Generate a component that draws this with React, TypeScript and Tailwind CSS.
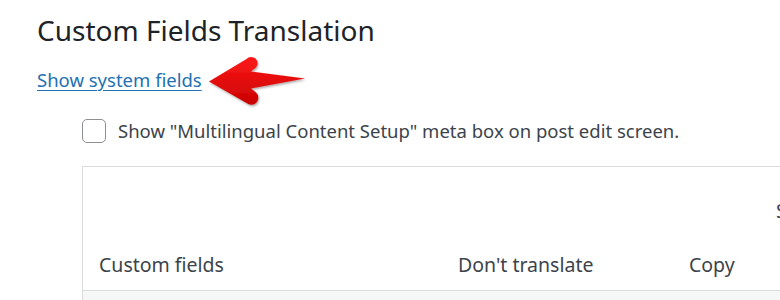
import React from "react";

export default function App() {
  return (
    <div className="relative w-[780px] h-[300px] overflow-hidden bg-white font-['Noto_Sans',sans-serif] text-[#3c434a]">
      <div className="pl-[37px] pt-[12px]">
        <h1 className="text-[28px] leading-[36px] text-[#1d2327] font-normal">Custom Fields Translation</h1>
        <div className="mt-[20px] leading-[24px]">
          <a href="#" className="text-[18.5px] text-[#2271b1] underline underline-offset-[3px] decoration-1">
            Show system fields
          </a>
        </div>
        <div className="mt-[26px] ml-[45px] flex items-center gap-[12px]">
          <span className="w-[24px] h-[24px] rounded-[5px] border border-[#8c8f94] bg-white shrink-0"></span>
          <span className="text-[18.5px] leading-[24px]">Show "Multilingual Content Setup" meta box on post edit screen.</span>
        </div>
        <div className="mt-[23px] ml-[45px] w-[900px] border border-[#dcdcde]">
          <div className="flex h-[62px] items-end">
            <div className="ml-[693px] text-[19.5px] leading-[24px] pb-[6px]">Synchronize</div>
          </div>
          <div className="flex h-[62px] items-center text-[19.5px] border-b border-[#dcdcde] pt-[11px]">
            <div className="w-[358px] pl-[16px]">Custom fields</div>
            <div className="w-[232px] pl-[17px]">Don't translate</div>
            <div className="pl-[16px]">Copy</div>
          </div>
          <div className="h-[40px] bg-[#f6f7f7]"></div>
        </div>
      </div>
      <svg className="absolute left-0 top-0" width="780" height="300" viewBox="0 0 780 300">
        <defs>
          <linearGradient id="rg" x1="0" y1="0" x2="0" y2="1">
            <stop offset="0" stopColor="#ff1a1a" />
            <stop offset="1" stopColor="#c80000" />
          </linearGradient>
          <filter id="sh" x="-20%" y="-20%" width="140%" height="140%">
            <feDropShadow dx="1" dy="1.5" stdDeviation="1" floodColor="#000" floodOpacity="0.35" />
          </filter>
        </defs>
        <path
          d="M209,81.5 L246.5,59 A6,6 0 0 1 256,67.5 L251,71.5 L305,78.5 L251,88.5 L256,92.5 A6,6 0 0 1 246.5,103 Z"
          fill="url(#rg)"
          filter="url(#sh)"
        />
      </svg>
    </div>
  );
}
